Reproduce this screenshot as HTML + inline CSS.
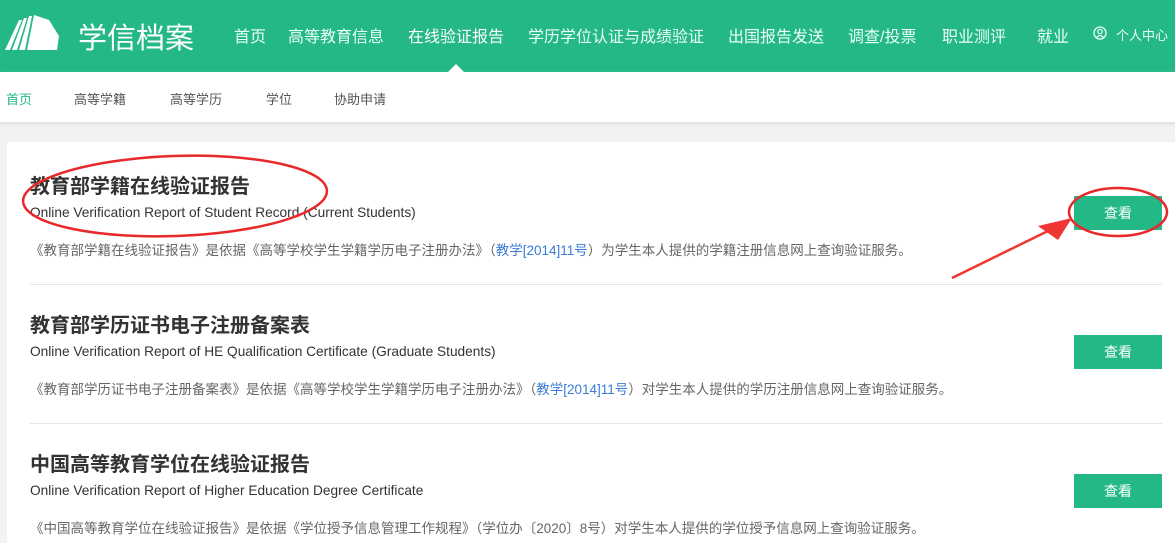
<!DOCTYPE html>
<html><head><meta charset="utf-8"><style>
*{margin:0;padding:0;box-sizing:border-box}
body{width:1175px;height:543px;overflow:hidden;background:#f2f2f2;font-family:"Liberation Sans","Noto Sans CJK SC",sans-serif;position:relative}
.hd{position:absolute;left:0;top:0;width:1175px;height:72px;background:#25b887}
.logo{position:absolute;left:78px;top:15px;color:#fff;font-size:29px;letter-spacing:0px}
.nav{position:absolute;top:23px;color:#eafff5;font-size:16px;white-space:nowrap}
.tri{position:absolute;left:448px;top:64px;width:0;height:0;border-left:8px solid transparent;border-right:8px solid transparent;border-bottom:8px solid #fff}
.sub{position:absolute;left:0;top:72px;width:1175px;height:50px;background:#fff;box-shadow:0 2px 3px #ddd}
.sub span{position:absolute;top:17px;font-size:13px;color:#555}
.card{position:absolute;left:7px;top:142px;width:1168px;height:401px;background:#fff}
.t{position:absolute;left:30px;font-size:20px;font-weight:bold;color:#333}
.e{position:absolute;left:30px;font-size:13.7px;color:#333}
.d{position:absolute;left:30px;font-size:13.5px;color:#666;white-space:nowrap}
.d b{font-weight:normal;color:#3a7bd5}
.btn{position:absolute;left:1074px;width:88px;height:34px;background:#25b887;color:#fff;font-size:14px;text-align:center;line-height:34px}
.ln{position:absolute;left:30px;width:1132px;height:1px;background:#e5e5e5}
</style></head><body>
<div class="hd">
<svg style="position:absolute;left:5px;top:14px" width="55" height="38" viewBox="0 0 55 38"><path d="M0 36 L14 6 L17 6 L5 36Z M7 36 L19 4 L22 4 L12 36Z M14 36 L24 2 L27 2 L20 36Z M22 36 L29 1 L44 6 L54 22 L52 36Z" fill="#fff"/></svg>
<div class="logo">学信档案</div>
<div class="nav" style="left:234px">首页</div>
<div class="nav" style="left:288px">高等教育信息</div>
<div class="nav" style="left:408px;color:#fff">在线验证报告</div>
<div class="nav" style="left:528px">学历学位认证与成绩验证</div>
<div class="nav" style="left:728px">出国报告发送</div>
<div class="nav" style="left:848px">调查/投票</div>
<div class="nav" style="left:942px">职业测评</div>
<div class="nav" style="left:1037px">就业</div>
<svg style="position:absolute;left:1093px;top:26px" width="14" height="14" viewBox="0 0 14 14"><circle cx="7" cy="7" r="6" fill="none" stroke="#eafff5" stroke-width="1.3"/><circle cx="7" cy="5.5" r="2.2" fill="none" stroke="#eafff5" stroke-width="1.2"/><path d="M3.5 11.5 Q7 7.5 10.5 11.5" fill="none" stroke="#eafff5" stroke-width="1.2"/></svg>
<div class="nav" style="left:1116px;top:25px;font-size:13px">个人中心</div>
<div class="tri"></div>
</div>
<div class="sub">
<span style="left:6px;color:#25b887">首页</span>
<span style="left:74px">高等学籍</span>
<span style="left:170px">高等学历</span>
<span style="left:266px">学位</span>
<span style="left:334px">协助申请</span>
</div>
<div class="card"></div>
<div class="t" style="top:170px">教育部学籍在线验证报告</div>
<div class="e" style="top:205px">Online Verification Report of Student Record (Current Students)</div>
<div class="d" style="top:239px">《教育部学籍在线验证报告》是依据《高等学校学生学籍学历电子注册办法》（<b>教学[2014]11号</b>）为学生本人提供的学籍注册信息网上查询验证服务。</div>
<div class="btn" style="top:196px">查看</div>
<div class="ln" style="top:284px"></div>
<div class="t" style="top:309px">教育部学历证书电子注册备案表</div>
<div class="e" style="top:344px">Online Verification Report of HE Qualification Certificate (Graduate Students)</div>
<div class="d" style="top:378px">《教育部学历证书电子注册备案表》是依据《高等学校学生学籍学历电子注册办法》（<b>教学[2014]11号</b>）对学生本人提供的学历注册信息网上查询验证服务。</div>
<div class="btn" style="top:335px">查看</div>
<div class="ln" style="top:423px"></div>
<div class="t" style="top:448px">中国高等教育学位在线验证报告</div>
<div class="e" style="top:483px">Online Verification Report of Higher Education Degree Certificate</div>
<div class="d" style="top:517px">《中国高等教育学位在线验证报告》是依据《学位授予信息管理工作规程》（学位办〔2020〕8号）对学生本人提供的学位授予信息网上查询验证服务。</div>
<div class="btn" style="top:474px">查看</div>
<svg style="position:absolute;left:0;top:0" width="1175" height="543">
<ellipse cx="175" cy="196" rx="152" ry="40" fill="none" stroke="#e8282b" stroke-width="2.5" transform="rotate(-2 175 196)"/>
<ellipse cx="1118" cy="212" rx="49" ry="24" fill="none" stroke="#e8282b" stroke-width="2.5"/>
<path d="M952 278 L1050 230" stroke="#f03535" stroke-width="2.5"/>
<path d="M1072 218 L1038 226 L1058 240Z" fill="#f03535"/>
</svg>
</body></html>
